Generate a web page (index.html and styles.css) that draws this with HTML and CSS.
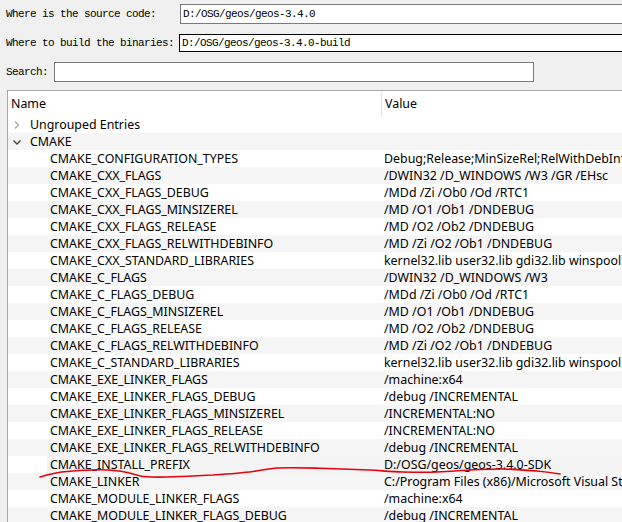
FILE: index.html
```html
<!DOCTYPE html>
<html>
<head>
<meta charset="utf-8">
<link rel="stylesheet" href="styles.css">
</head>
<body>
<div class="page">
  <div class="form">
    <div class="frow r1">
      <span class="lbl l1">Where is the source code:</span>
      <div class="inp">D:/OSG/geos/geos-3.4.0</div>
    </div>
    <div class="frow r2">
      <span class="lbl l2">Where to build the binaries:</span>
      <div class="inp focus">D:/OSG/geos/geos-3.4.0-build</div>
    </div>
    <div class="frow r3">
      <span class="lbl l3">Search:</span>
      <div class="inp"></div>
    </div>
  </div>

  <div class="tree">
    <div class="thead">
      <div class="cname">Name</div>
      <div class="cval">Value</div>
    </div>
    <div class="rows">
      <div class="row top"><span class="arrow"><svg width="10" height="10" viewBox="0 0 10 10"><path d="M3 1.5 L6.5 5 L3 8.5" fill="none" stroke="#a6a6a6" stroke-width="1.3"/></svg></span><span class="n">Ungrouped Entries</span></div>
      <div class="row top alt"><span class="arrow"><svg width="10" height="10" viewBox="0 0 10 10"><path d="M1.5 3.5 L5 7 L8.5 3.5" fill="none" stroke="#404040" stroke-width="1.3"/></svg></span><span class="n">CMAKE</span></div>
      <div class="row"><span class="n">CMAKE_CONFIGURATION_TYPES</span><span class="v">Debug;Release;MinSizeRel;RelWithDebInfo</span></div>
      <div class="row alt"><span class="n">CMAKE_CXX_FLAGS</span><span class="v">/DWIN32 /D_WINDOWS /W3 /GR /EHsc</span></div>
      <div class="row"><span class="n">CMAKE_CXX_FLAGS_DEBUG</span><span class="v">/MDd /Zi /Ob0 /Od /RTC1</span></div>
      <div class="row alt"><span class="n">CMAKE_CXX_FLAGS_MINSIZEREL</span><span class="v">/MD /O1 /Ob1 /DNDEBUG</span></div>
      <div class="row"><span class="n">CMAKE_CXX_FLAGS_RELEASE</span><span class="v">/MD /O2 /Ob2 /DNDEBUG</span></div>
      <div class="row alt"><span class="n">CMAKE_CXX_FLAGS_RELWITHDEBINFO</span><span class="v">/MD /Zi /O2 /Ob1 /DNDEBUG</span></div>
      <div class="row"><span class="n">CMAKE_CXX_STANDARD_LIBRARIES</span><span class="v">kernel32.lib user32.lib gdi32.lib winspool.lib</span></div>
      <div class="row alt"><span class="n">CMAKE_C_FLAGS</span><span class="v">/DWIN32 /D_WINDOWS /W3</span></div>
      <div class="row"><span class="n">CMAKE_C_FLAGS_DEBUG</span><span class="v">/MDd /Zi /Ob0 /Od /RTC1</span></div>
      <div class="row alt"><span class="n">CMAKE_C_FLAGS_MINSIZEREL</span><span class="v">/MD /O1 /Ob1 /DNDEBUG</span></div>
      <div class="row"><span class="n">CMAKE_C_FLAGS_RELEASE</span><span class="v">/MD /O2 /Ob2 /DNDEBUG</span></div>
      <div class="row alt"><span class="n">CMAKE_C_FLAGS_RELWITHDEBINFO</span><span class="v">/MD /Zi /O2 /Ob1 /DNDEBUG</span></div>
      <div class="row"><span class="n">CMAKE_C_STANDARD_LIBRARIES</span><span class="v">kernel32.lib user32.lib gdi32.lib winspool.lib</span></div>
      <div class="row alt"><span class="n">CMAKE_EXE_LINKER_FLAGS</span><span class="v">/machine:x64</span></div>
      <div class="row"><span class="n">CMAKE_EXE_LINKER_FLAGS_DEBUG</span><span class="v">/debug /INCREMENTAL</span></div>
      <div class="row alt"><span class="n">CMAKE_EXE_LINKER_FLAGS_MINSIZEREL</span><span class="v">/INCREMENTAL:NO</span></div>
      <div class="row"><span class="n">CMAKE_EXE_LINKER_FLAGS_RELEASE</span><span class="v">/INCREMENTAL:NO</span></div>
      <div class="row alt"><span class="n">CMAKE_EXE_LINKER_FLAGS_RELWITHDEBINFO</span><span class="v">/debug /INCREMENTAL</span></div>
      <div class="row hover"><span class="n">CMAKE_INSTALL_PREFIX</span><span class="v">D:/OSG/geos/geos-3.4.0-SDK</span></div>
      <div class="row alt"><span class="n">CMAKE_LINKER</span><span class="v">C:/Program Files (x86)/Microsoft Visual Studio</span></div>
      <div class="row"><span class="n">CMAKE_MODULE_LINKER_FLAGS</span><span class="v">/machine:x64</span></div>
      <div class="row alt"><span class="n">CMAKE_MODULE_LINKER_FLAGS_DEBUG</span><span class="v">/debug /INCREMENTAL</span></div>
    </div>
  </div>

  <svg class="scribble" width="622" height="522" viewBox="0 0 622 522">
    <path d="M40 477 C50 474 58 472 67 471.5 C80 470.5 92 469.5 100 469.8 C112 470 120 471 127 472.5 C134 474 138 476 143 476.5 C152 477.2 160 477.2 167 477 C185 476.5 200 475.5 213 475 C228 474 242 473 253 471.5 C263 470 270 468.5 277 468 C295 467.5 310 468 320 468.2 C340 468.8 355 469.5 370 470 C385 471 395 472 403 472 C415 472.2 427 472.3 437 472 C450 471.5 460 470.5 470 470 C482 469.4 493 469 503 469 C515 469.2 527 470.2 537 471 C547 472 554 473 560 474" fill="none" stroke="#e8000b" stroke-width="1.6" stroke-linecap="round"/>
  </svg>
</div>
</body>
</html>
```

FILE: styles.css
```css
html, body {
  margin: 0;
  padding: 0;
  background: #f0f0f0;
  overflow: hidden;
}
.page {
  position: relative;
  width: 622px;
  height: 522px;
  overflow: hidden;
}
.form {
  padding-top: 4px;
  display: flex;
  flex-direction: column;
  gap: 10px;
}
.frow {
  display: flex;
  align-items: center;
  white-space: nowrap;
}
.r1 { height: 20px; }
.r2 { height: 18px; }
.r3 { height: 20px; }
.lbl {
  font-family: "Liberation Mono", monospace;
  font-size: 11px;
  letter-spacing: -0.6px;
  color: #000;
  padding-left: 6px;
  box-sizing: border-box;
  flex: none;
}
.l1 { width: 180px; }
.l2 { width: 179px; }
.l3 { width: 54px; }
.inp {
  flex: none;
  width: 480px;
  height: 100%;
  box-sizing: border-box;
  border: 1px solid #7a7a7a;
  background: #fff;
  font-family: "Liberation Mono", monospace;
  font-size: 11px;
  letter-spacing: -0.6px;
  padding-left: 2px;
  display: flex;
  align-items: center;
  color: #000;
}
.inp.focus { border-color: #000; }

.tree {
  margin-top: 8px;
  margin-left: 7px;
  width: 640px;
  height: 460px;
  border: 1px solid #a8a8a8;
  background: #fff;
  font-family: "Noto Sans", sans-serif;
  font-size: 12.4px;
  color: #000;
  overflow: hidden;
}
.thead {
  display: flex;
  height: 25px;
  align-items: center;
}
.cname {
  width: 373px;
  padding-left: 3px;
  box-sizing: border-box;
  flex: none;
}
.cval {
  flex: none;
  border-left: 1px solid #e3e3e3;
  height: 100%;
  box-sizing: border-box;
  padding-left: 3px;
  display: flex;
  align-items: center;
}
.row {
  display: flex;
  height: 17px;
  align-items: center;
  white-space: nowrap;
  padding-left: 42px;
}
.row.alt { background: #f5f5f5; }
.row.top { padding-left: 4px; }
.row.hover {
  background: linear-gradient(to right, #fff 39px, #f3f3f3 39px);
}
.arrow {
  width: 18px;
  flex: none;
  display: flex;
  align-items: center;
  justify-content: flex-start;
}
.row .n {
  width: 331px;
  flex: none;
  overflow: hidden;
}
.row.top .n { width: auto; }
.row .v {
  padding-left: 3px;
  flex: none;
}
.scribble {
  position: absolute;
  left: 0;
  top: 0;
  pointer-events: none;
}
```
